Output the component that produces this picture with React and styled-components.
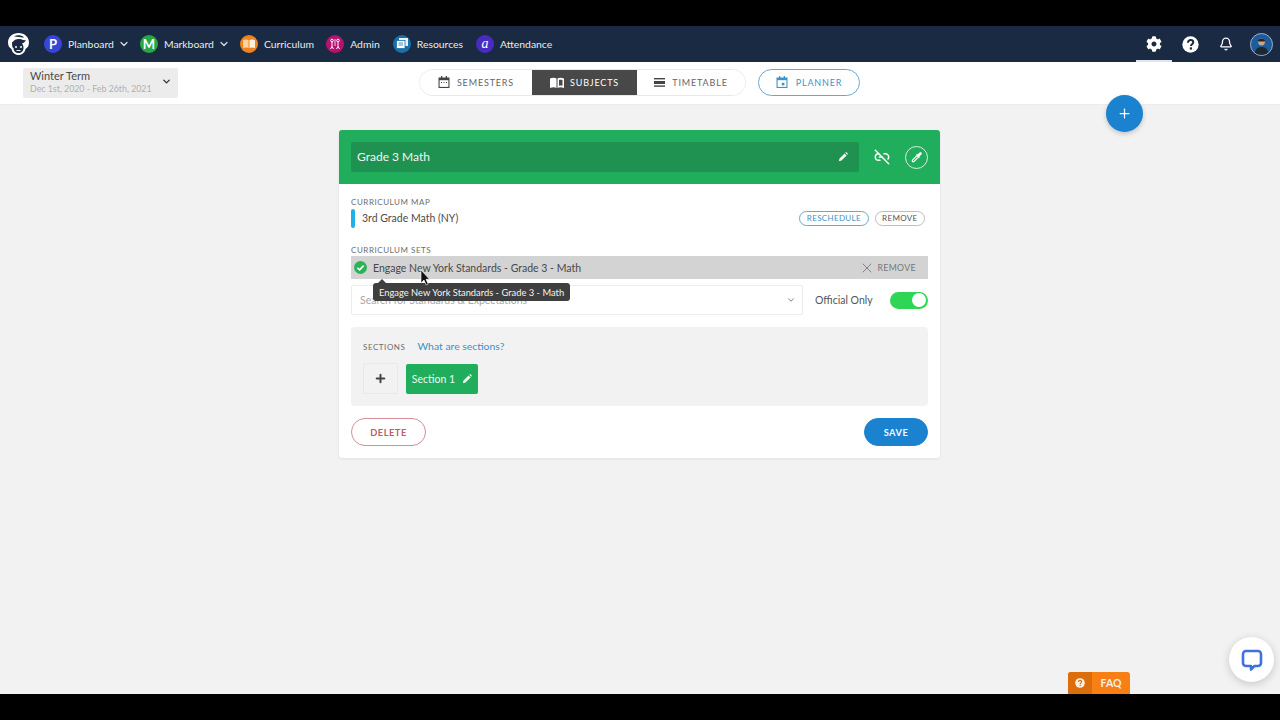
import React from "react";
import styled, { createGlobalStyle } from "styled-components";
import { Bell, ChevronDown, Link2Off, Plus, X } from "lucide-react";
import { FaCog } from "react-icons/fa";

const GlobalStyle = createGlobalStyle`
  html, body {
    margin: 0;
    padding: 0;
    background: #000;
  }
  body {
    font-family: "Lato", "Liberation Sans", sans-serif;
    color: #444;
  }
  * {
    box-sizing: border-box;
  }
`;

const Page = styled.div`
  position: relative;
  width: 1280px;
  height: 720px;
  padding: 26px 0;
  overflow: hidden;
  background: #000;
`;

const Screen = styled.div`
  height: 668px;
  display: flex;
  flex-direction: column;
  background: #f2f2f2;
`;

const Nav = styled.div`
  height: 36px;
  flex: none;
  display: flex;
  align-items: center;
  justify-content: space-between;
  padding: 0 7px 0 8px;
  background: #1a2a42;
`;

const NavLeft = styled.div`
  display: flex;
  align-items: center;
  margin-top: -1px;
`;

const Logo = styled.div`
  width: 21px;
  height: 22px;
  margin-right: 15px;
`;

const NavItem = styled.div`
  display: flex;
  align-items: center;
  margin-right: ${(p) => p.$gap}px;
  color: #e8ebef;
  font-size: 10.4px;
`;

const AppBadge = styled.span`
  width: 18px;
  height: 18px;
  flex: none;
  display: flex;
  align-items: center;
  justify-content: center;
  margin-right: 6px;
  border-radius: 50%;
  background: ${(p) => p.$color};
  color: #fff;
  font-size: ${(p) => (p.$italic ? 14 : 13)}px;
  font-family: ${(p) => (p.$italic ? '"Liberation Serif", serif' : "inherit")};
  font-style: ${(p) => (p.$italic ? "italic" : "normal")};
  font-weight: ${(p) => (p.$italic ? 400 : 700)};
`;

const Caret = styled(ChevronDown)`
  margin-left: 4px;
  color: #d7dce2;
`;

const NavRight = styled.div`
  display: flex;
  align-items: center;
  height: 36px;
`;

const NavIcon = styled.div`
  width: 36px;
  height: 36px;
  display: flex;
  align-items: center;
  justify-content: center;
  color: #fff;
  ${(p) => p.$active && "border-bottom: 2px solid #dfe5ee; padding-top: 2px;"}
`;

const Avatar = styled.div`
  width: 23px;
  height: 23px;
  margin-left: 6px;
  border-radius: 50%;
  border: 1px solid #9fb2c8;
  overflow: hidden;
  background: #1c5c9e;
`;

const SubBar = styled.div`
  position: relative;
  height: 43px;
  flex: none;
  display: flex;
  align-items: center;
  gap: 12px;
  padding: 0 0 2px 419px;
  background: #fff;
  border-bottom: 1px solid #ececec;
`;

const TermSelect = styled.div`
  position: absolute;
  left: 23px;
  top: 6px;
  width: 155px;
  height: 30px;
  display: flex;
  align-items: center;
  justify-content: space-between;
  padding: 0 6px 3px 7px;
  border-radius: 2px;
  background: #ececec;
`;

const TermName = styled.div`
  font-size: 11px;
  line-height: 13px;
  color: #4a4a4a;
`;

const TermDates = styled.div`
  font-size: 8.8px;
  line-height: 11px;
  margin-top: 1px;
  color: #b0b0b0;
`;

const Tabs = styled.div`
  width: 327px;
  height: 27px;
  display: flex;
  border: 1px solid #e9e9e9;
  border-radius: 14px;
  overflow: hidden;
`;

const Tab = styled.div`
  flex: ${(p) => p.$flex};
  display: flex;
  align-items: center;
  justify-content: center;
  gap: ${(p) => p.$gap}px;
  font-size: 9px;
  letter-spacing: 0.85px;
  background: ${(p) => (p.$active ? "#484848" : "#fff")};
  color: ${(p) => (p.$active ? "#fff" : "#666")};
`;

const PlannerButton = styled.div`
  width: 102px;
  height: 27px;
  display: flex;
  align-items: center;
  justify-content: center;
  gap: 8px;
  border: 1px solid #6ba6cf;
  border-radius: 14px;
  font-size: 9px;
  letter-spacing: 0.85px;
  color: #3f93c9;
`;

const Content = styled.div`
  flex: 1;
  padding: 25px 0 0 339px;
`;

const Card = styled.div`
  width: 601px;
  height: 328px;
  border-radius: 3px;
  background: #fff;
  box-shadow: 0 1px 3px rgba(0, 0, 0, 0.08);
`;

const CardHeader = styled.div`
  height: 54px;
  display: flex;
  align-items: center;
  padding: 0 12px;
  border-radius: 3px 3px 0 0;
  background: #20ae5c;
  color: #fff;
`;

const TitleField = styled.div`
  width: 508px;
  height: 30px;
  flex: none;
  display: flex;
  align-items: center;
  justify-content: space-between;
  padding: 0 11px 1px 6px;
  margin-right: 14px;
  border-radius: 2px;
  background: #1f9150;
  font-size: 12px;
  color: #f2f7f3;
`;

const HeaderIcon = styled.div`
  width: ${(p) => p.$size}px;
  height: ${(p) => p.$size}px;
  display: flex;
  align-items: center;
  justify-content: center;
  margin-left: ${(p) => p.$left}px;
  border-radius: 50%;
  border: ${(p) => (p.$ring ? "1px solid #d8efe0" : "none")};
`;

const CardBody = styled.div`
  padding: 12px 12px 0;
`;

const Label = styled.div`
  padding-top: 1px;
  font-size: 8px;
  line-height: 11px;
  letter-spacing: 0.55px;
  color: #6d6d6d;
`;

const MapRow = styled.div`
  height: 20px;
  display: flex;
  align-items: center;
  margin-bottom: 16px;
`;

const ColorTag = styled.span`
  width: 4px;
  height: 19px;
  margin-right: 7px;
  border-radius: 2px;
  background: #1fb0e8;
`;

const MapName = styled.span`
  flex: 1;
  font-size: 10.5px;
  color: #4c4c4c;
`;

const PillSmall = styled.span`
  height: 15px;
  display: flex;
  align-items: center;
  margin-right: ${(p) => p.$right}px;
  padding: 0 6.5px;
  border-radius: 8px;
  border: 1px solid ${(p) => (p.$blue ? "#6ba6cf" : "#bdbdbd")};
  font-size: 8px;
  letter-spacing: 0.35px;
  color: ${(p) => (p.$blue ? "#3f93c9" : "#555")};
`;

const SetRow = styled.div`
  position: relative;
  height: 23px;
  display: flex;
  align-items: center;
  padding: 0 12px 0 3px;
  background: #d3d3d3;
`;

const SetName = styled.span`
  flex: 1;
  margin-left: 6px;
  font-size: 10.5px;
  color: #484848;
`;

const SetRemove = styled.span`
  display: flex;
  align-items: center;
  gap: 2px;
  font-size: 8.7px;
  letter-spacing: 0.4px;
  color: #777;
`;

const SearchRow = styled.div`
  height: 30px;
  display: flex;
  align-items: center;
  margin-top: 6px;
`;

const SearchBox = styled.div`
  width: 452px;
  height: 30px;
  display: flex;
  align-items: center;
  justify-content: space-between;
  padding: 0 6px 0 8px;
  border: 1px solid #ececec;
  border-radius: 2px;
  font-size: 10.5px;
  color: #a9a9a9;
`;

const OfficialLabel = styled.span`
  flex: 1;
  margin-left: 12px;
  font-size: 10.5px;
  color: #555;
`;

const Switch = styled.div`
  width: 38px;
  height: 17px;
  display: flex;
  justify-content: flex-end;
  align-items: center;
  padding: 0 2px;
  border-radius: 9px;
  background: #2fd655;
`;

const SwitchKnob = styled.span`
  width: 14px;
  height: 14px;
  border-radius: 50%;
  background: #fff;
`;

const SectionsPanel = styled.div`
  height: 79px;
  margin-top: 12px;
  padding: 12px;
  border-radius: 4px;
  background: #f2f2f2;
`;

const SectionsHead = styled.div`
  display: flex;
  align-items: center;
  gap: 12px;
  height: 14px;
`;

const SectionsHint = styled.span`
  padding-top: 2px;
  font-size: 8px;
  letter-spacing: 0.55px;
  color: #6d6d6d;
`;

const SectionsLink = styled.span`
  font-size: 10.4px;
  color: #3f8fc7;
`;

const SectionsList = styled.div`
  display: flex;
  align-items: flex-end;
  gap: 8px;
  margin-top: 10px;
`;

const AddSection = styled.div`
  width: 35px;
  height: 31px;
  display: flex;
  align-items: center;
  justify-content: center;
  border: 1px solid #e9e9e9;
  border-radius: 2px;
  color: #444;
`;

const SectionChip = styled.div`
  width: 72px;
  height: 30px;
  display: flex;
  align-items: center;
  justify-content: center;
  gap: 7px;
  border-radius: 2px;
  background: #20ae5c;
  color: #eef8f1;
  font-size: 10.5px;
`;

const Actions = styled.div`
  display: flex;
  justify-content: space-between;
  margin-top: 12px;
`;

const ActionButton = styled.div`
  width: ${(p) => p.$width}px;
  height: 28px;
  display: flex;
  align-items: center;
  justify-content: center;
  border-radius: 14px;
  font-size: 9.3px;
  font-weight: 700;
  letter-spacing: 0.5px;
  border: 1px solid ${(p) => (p.$primary ? "#1a82cf" : "#d68d98")};
  background: ${(p) => (p.$primary ? "#1a82cf" : "#fff")};
  color: ${(p) => (p.$primary ? "#f2f8fc" : "#c35a69")};
`;

const Tooltip = styled.div`
  position: absolute;
  left: 22px;
  top: 27px;
  height: 18px;
  display: flex;
  align-items: center;
  padding: 0 6px;
  border-radius: 3px;
  background: #3f3f3f;
  color: #f4f4f4;
  font-size: 9.35px;
  white-space: nowrap;
  &::before {
    content: "";
    position: absolute;
    left: 5px;
    top: -4px;
    border-left: 4px solid transparent;
    border-right: 4px solid transparent;
    border-bottom: 4px solid #3f3f3f;
  }
`;

const Cursor = styled.svg`
  position: absolute;
  left: 69px;
  top: 14px;
`;

const Fab = styled.div`
  position: absolute;
  left: 1106px;
  top: 95px;
  width: 37px;
  height: 37px;
  display: flex;
  align-items: center;
  justify-content: center;
  border-radius: 50%;
  background: #1a82cf;
  color: #fff;
  box-shadow: 0 2px 5px rgba(0, 0, 0, 0.2);
`;

const ChatBubble = styled.div`
  position: absolute;
  left: 1229px;
  top: 637px;
  width: 45px;
  height: 45px;
  display: flex;
  align-items: center;
  justify-content: center;
  border-radius: 50%;
  background: #fff;
  box-shadow: 0 2px 8px rgba(0, 0, 0, 0.18);
`;

const Faq = styled.div`
  position: absolute;
  left: 1068px;
  top: 672px;
  width: 62px;
  height: 22px;
  display: flex;
  border-radius: 3px 3px 0 0;
  overflow: hidden;
  background: #f77f14;
  color: #fdf0e2;
  font-size: 10.5px;
  font-weight: 700;
`;

const FaqIcon = styled.span`
  width: 24px;
  display: flex;
  align-items: center;
  justify-content: center;
  background: #dc6d0c;
`;

const FaqText = styled.span`
  flex: 1;
  display: flex;
  align-items: center;
  justify-content: center;
`;

// Round "?" used by the nav bar and the FAQ tab
const HelpIcon = ({ size, fill, mark }) => (
  <svg width={size} height={size} viewBox="0 0 24 24">
    <circle cx="12" cy="12" r="11.5" fill={fill} />
    <path
      d="M8.4 9.4c0-2.3 1.7-3.7 3.8-3.7 2.1 0 3.7 1.3 3.7 3.2 0 2.7-3.3 2.8-3.3 5.3"
      fill="none"
      stroke={mark}
      strokeWidth="2.8"
    />
    <rect x="11" y="16" width="3.1" height="3.1" fill={mark} />
  </svg>
);

const FilledPencil = ({ size = 10 }) => (
  <svg width={size} height={size} viewBox="0 0 24 24" fill="currentColor">
    <path d="M2 22l1.6-6.4L15.8 3.4l4.8 4.8L8.4 20.4 2 22zM17.3 1.9l1.4-1.2c.6-.5 1.4-.5 2 0l2.6 2.6c.5.6.5 1.4 0 2l-1.2 1.4-4.8-4.8z" />
  </svg>
);

const LogoMark = () => (
  <Logo>
    <svg width="21" height="22" viewBox="0 0 21 22">
      <path d="M10.5 0C4.5 0 0 4 0 9.5c0 3 1.2 5.2 3.5 6.5.6 3.5 3.5 6 7 6s6.4-2.5 7-6c2.3-1.3 3.5-3.5 3.5-6.5C21 4 16.5 0 10.5 0z" fill="#fff" />
      <path d="M4 9.5c2.5-3 5-4 8-3.5 2 .3 3.5 1.7 6 1-.8 2-2.3 3-4 3.2 1 1.5 1.5 3 1.5 4.8 0 3-2.2 5-5 5s-5-2-5-5c-1 0-1.5-1.5-1.5-5.5z" fill="#1a2a42" />
      <path d="M6 3.5c3-1.8 7-1.5 10 .8-2.5.7-5.5-.8-10-.8z" fill="#1a2a42" />
      <circle cx="8" cy="14" r="1" fill="#fff" />
      <circle cx="13" cy="14" r="1" fill="#fff" />
      <path d="M8.5 17.5h4" stroke="#fff" strokeWidth="0.9" />
    </svg>
  </Logo>
);

const CurriculumGlyph = () => (
  <svg width="12" height="9" viewBox="0 0 12 9">
    <path d="M0 1c2-.8 4-.8 5.5 0v8C4 8.2 2 8.2 0 9z" fill="#ffd3a0" />
    <path d="M6.5 1C8 .2 10 .2 12 1v8c-2-.8-4-.8-5.5 0z" fill="#fff0dc" />
  </svg>
);

const AdminGlyph = () => (
  <svg width="12" height="12" viewBox="0 0 12 12" fill="none" stroke="#fff" strokeWidth="1">
    <circle cx="3" cy="2.5" r="1.3" />
    <circle cx="9" cy="2.5" r="1.3" />
    <path d="M3 4v4.5L1.5 11M3 8.5L4.5 11M9 4v4.5L7.5 11M9 8.5l1.5 2.5" />
    <path d="M6 1v7" strokeWidth="0.8" />
  </svg>
);

const ResourcesGlyph = () => (
  <svg width="12" height="11" viewBox="0 0 12 11">
    <rect x="3" y="0" width="9" height="8" fill="#eaf2f8" />
    <rect x="0.5" y="2.5" width="8.5" height="8" fill="#fff" stroke="#1b6fa8" strokeWidth="0.8" />
    <path d="M2.5 5h4.5M2.5 7h4.5" stroke="#1b6fa8" strokeWidth="0.8" />
  </svg>
);

const CalendarGlyph = ({ color, dot }) => (
  <svg width="12" height="12" viewBox="0 0 12 12">
    <path d="M3 0h1.3v1.5h3.4V0H9v1.5h2.5V12H.5V1.5H3z" fill={color} />
    <rect x="1.6" y="4.2" width="8.8" height="6.7" fill="#fff" />
    {dot ? (
      <rect x="5.8" y="6.8" width="2.6" height="2.6" fill={color} />
    ) : (
      <path d="M3 6.5h1M5.5 6.5h1M8 6.5h1" stroke={color} strokeWidth="1" />
    )}
  </svg>
);

const BookGlyph = () => (
  <svg width="14" height="11" viewBox="0 0 14 11">
    <path d="M0 1.5C2.5.5 4.8.5 6.5 1.5V11C4.8 10 2.5 10 0 11z" fill="#fff" />
    <path d="M7.5 1.5C9.2.5 11.5.5 14 1.5V11c-2.5-1-4.8-1-6.5 0z" fill="#fff" />
    <path d="M9 3c1-.4 2.3-.4 3.5 0v5.8c-1.2-.4-2.5-.4-3.5 0z" fill="#484848" />
  </svg>
);

const TimetableGlyph = () => (
  <svg width="11" height="9" viewBox="0 0 11 9" fill="#444">
    <rect width="11" height="1.4" />
    <rect y="3" width="11" height="3" />
    <rect y="7.4" width="11" height="1.4" />
  </svg>
);

const EyeDropper = () => (
  <svg width="12" height="12" viewBox="0 0 24 24">
    <path d="M3 21c-.7-1-.6-2.3.3-3.2L12 9l3 3-8.800 8.700c-.9.9-2.200 1-3.200.3z" fill="none" stroke="#fff" strokeWidth="2.4" />
    <path d="M10.5 7.500l6 6 1.500-1.500-1.200-1.200 4-4c1.200-1.200 1.200-2.800.1-3.800s-2.700-1-3.800.1l-4 4L11.500 5.500z" fill="#fff" />
  </svg>
);

const CheckBadge = () => (
  <svg width="13" height="13" viewBox="0 0 13 13">
    <circle cx="6.5" cy="6.5" r="6.5" fill="#2bb457" />
    <path d="M3.4 6.7l2.2 2.2 4-4.3" fill="none" stroke="#fff" strokeWidth="1.6" />
  </svg>
);

const ChatIcon = () => (
  <svg width="24" height="24" viewBox="0 0 24 24">
    <path
      d="M6 3h12a3 3 0 0 1 3 3v9a3 3 0 0 1-3 3h-3.5L11 21.5V18H6a3 3 0 0 1-3-3V6a3 3 0 0 1 3-3z"
      fill="none"
      stroke="#3f72e0"
      strokeWidth="2.6"
      strokeLinejoin="round"
    />
  </svg>
);

const AvatarPhoto = () => (
  <svg width="21" height="21" viewBox="0 0 21 21">
    <circle cx="10.5" cy="8" r="3.4" fill="#c9a58c" />
    <path d="M7 6.5c0-2.4 7-2.4 7 0l-.5 1h-6z" fill="#2a2320" />
    <path d="M3.5 21c0-5.5 3-8 7-8s7 2.5 7 8z" fill="#1d2a2d" />
  </svg>
);

const apps = [
  { name: "Planboard", color: "#3647d8", letter: "P", gap: 10, caret: true },
  { name: "Markboard", color: "#27a844", letter: "M", gap: 10, caret: true },
  { name: "Curriculum", color: "#ee8420", glyph: <CurriculumGlyph />, gap: 12 },
  { name: "Admin", color: "#b5136f", glyph: <AdminGlyph />, gap: 13 },
  { name: "Resources", color: "#1b6fa8", glyph: <ResourcesGlyph />, gap: 13 },
  { name: "Attendance", color: "#4a2bc2", letter: "a", italic: true, gap: 0 },
];

export default function App() {
  return (
    <Page>
      <GlobalStyle />
      <Screen>
        <Nav>
          <NavLeft>
            <LogoMark />
            {apps.map((app) => (
              <NavItem key={app.name} $gap={app.gap}>
                <AppBadge $color={app.color} $italic={app.italic}>
                  {app.letter || app.glyph}
                </AppBadge>
                {app.name}
                {app.caret && <Caret size={12} strokeWidth={2.5} />}
              </NavItem>
            ))}
          </NavLeft>
          <NavRight>
            <NavIcon $active>
              <FaCog size={16} />
            </NavIcon>
            <NavIcon>
              <HelpIcon size={17} fill="#fff" mark="#1a2a42" />
            </NavIcon>
            <NavIcon>
              <Bell size={14} strokeWidth={2.2} />
            </NavIcon>
            <Avatar>
              <AvatarPhoto />
            </Avatar>
          </NavRight>
        </Nav>

        <SubBar>
          <TermSelect>
            <div>
              <TermName>Winter Term</TermName>
              <TermDates>Dec 1st, 2020 - Feb 26th, 2021</TermDates>
            </div>
            <ChevronDown size={11} color="#333" strokeWidth={3} />
          </TermSelect>
          <Tabs>
            <Tab $flex="0 0 112px" $gap={7}>
              <CalendarGlyph color="#444" />
              SEMESTERS
            </Tab>
            <Tab $flex="0 0 105px" $gap={6} $active>
              <BookGlyph />
              SUBJECTS
            </Tab>
            <Tab $flex="1" $gap={7}>
              <TimetableGlyph />
              TIMETABLE
            </Tab>
          </Tabs>
          <PlannerButton>
            <CalendarGlyph color="#3f93c9" dot />
            PLANNER
          </PlannerButton>
        </SubBar>

        <Content>
          <Card>
            <CardHeader>
              <TitleField>
                Grade 3 Math
                <FilledPencil size={10} />
              </TitleField>
              <HeaderIcon $size={18} $left={0}>
                <Link2Off size={16} strokeWidth={2.2} />
              </HeaderIcon>
              <HeaderIcon $size={23} $left={14} $ring>
                <EyeDropper />
              </HeaderIcon>
            </CardHeader>
            <CardBody>
              <Label>CURRICULUM MAP</Label>
              <MapRow>
                <ColorTag />
                <MapName>3rd Grade Math (NY)</MapName>
                <PillSmall $blue $right={6}>
                  RESCHEDULE
                </PillSmall>
                <PillSmall $right={3}>REMOVE</PillSmall>
              </MapRow>
              <Label>CURRICULUM SETS</Label>
              <SetRow>
                <CheckBadge />
                <SetName>Engage New York Standards - Grade 3 - Math</SetName>
                <SetRemove>
                  <X size={16} strokeWidth={1.3} />
                  REMOVE
                </SetRemove>
                <Tooltip>Engage New York Standards - Grade 3 - Math</Tooltip>
                <Cursor width="10" height="16" viewBox="0 0 10 16">
                  <path d="M1 0v13l3-3 2.2 5 2-1-2.2-4.7H9.5z" fill="#111" stroke="#fff" strokeWidth="0.6" />
                </Cursor>
              </SetRow>
              <SearchRow>
                <SearchBox>
                  Search for Standards &amp; Expectations
                  <ChevronDown size={10} color="#666" strokeWidth={2} />
                </SearchBox>
                <OfficialLabel>Official Only</OfficialLabel>
                <Switch>
                  <SwitchKnob />
                </Switch>
              </SearchRow>
              <SectionsPanel>
                <SectionsHead>
                  <SectionsHint>SECTIONS</SectionsHint>
                  <SectionsLink>What are sections?</SectionsLink>
                </SectionsHead>
                <SectionsList>
                  <AddSection>
                    <Plus size={13} strokeWidth={3.6} />
                  </AddSection>
                  <SectionChip>
                    Section 1
                    <FilledPencil size={10} />
                  </SectionChip>
                </SectionsList>
              </SectionsPanel>
              <Actions>
                <ActionButton $width={75}>DELETE</ActionButton>
                <ActionButton $width={64} $primary>
                  SAVE
                </ActionButton>
              </Actions>
            </CardBody>
          </Card>
        </Content>
      </Screen>

      <Fab>
        <Plus size={15} strokeWidth={2} />
      </Fab>
      <ChatBubble>
        <ChatIcon />
      </ChatBubble>
      <Faq>
        <FaqIcon>
          <HelpIcon size={10} fill="#fdf0e2" mark="#dc6d0c" />
        </FaqIcon>
        <FaqText>FAQ</FaqText>
      </Faq>
    </Page>
  );
}
